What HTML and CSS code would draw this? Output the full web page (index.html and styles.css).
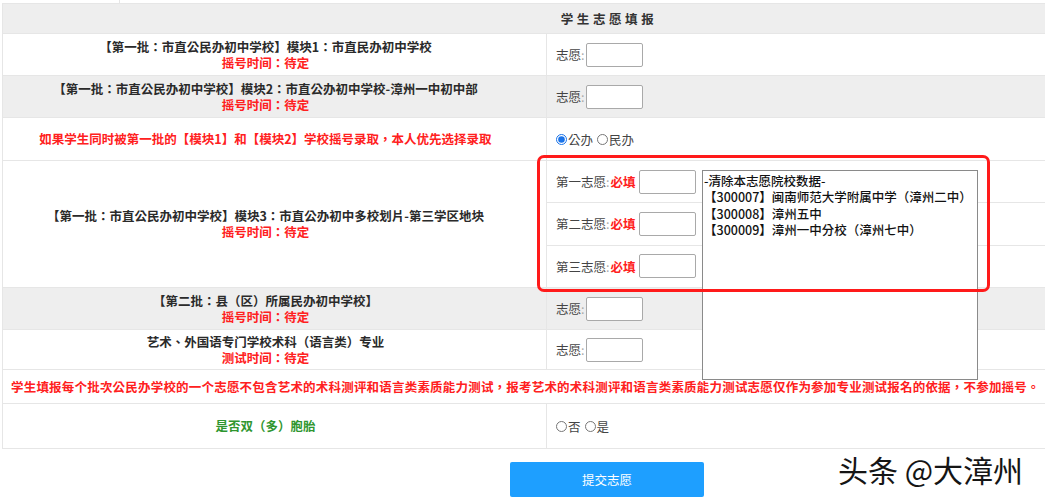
FILE: index.html
```html
<!DOCTYPE html>
<html lang="zh-CN">
<head>
<meta charset="utf-8">
<title>学生志愿填报</title>
<link rel="stylesheet" href="styles.css">
</head>
<body>
<div class="page">
  <div class="sliver"><div class="sliver-cell"></div></div>
  <div class="tbl">
    <div class="row head"><div class="head-title">学生志愿填报</div></div>

    <div class="row">
      <div class="cl"><div class="lbl">【第一批：市直公民办初中学校】模块1：市直民办初中学校</div><div class="red">摇号时间：待定</div></div>
      <div class="cr"><span class="fl">志愿<i>:</i></span><span class="inp"></span></div>
    </div>

    <div class="row gray">
      <div class="cl"><div class="lbl">【第一批：市直公民办初中学校】模块2：市直公办初中学校-漳州一中初中部</div><div class="red">摇号时间：待定</div></div>
      <div class="cr"><span class="fl">志愿<i>:</i></span><span class="inp"></span></div>
    </div>

    <div class="row r3">
      <div class="cl"><div class="red">如果学生同时被第一批的【模块1】和【模块2】学校摇号录取，本人优先选择录取</div></div>
      <div class="cr">
        <label class="radio"><input type="radio" name="pri" checked>公办</label>
        <label class="radio"><input type="radio" name="pri">民办</label>
      </div>
    </div>

    <div class="row r4">
      <div class="cl"><div class="lbl">【第一批：市直公民办初中学校】模块3：市直公办初中多校划片-第三学区地块</div><div class="red">摇号时间：待定</div></div>
      <div class="cr sub-wrap">
        <div class="sub"><span class="fl">第一志愿<i>:</i></span><span class="must">必填</span><span class="inp"></span></div>
        <div class="sub"><span class="fl">第二志愿<i>:</i></span><span class="must">必填</span><span class="inp"></span></div>
        <div class="sub"><span class="fl">第三志愿<i>:</i></span><span class="must">必填</span><span class="inp"></span></div>
        <div class="listbox">
          <div class="opt">-清除本志愿院校数据-</div>
          <div class="opt">【300007】闽南师范大学附属中学（漳州二中）</div>
          <div class="opt">【300008】漳州五中</div>
          <div class="opt">【300009】漳州一中分校（漳州七中）</div>
        </div>
      </div>
    </div>

    <div class="row gray">
      <div class="cl"><div class="lbl">【第二批：县（区）所属民办初中学校】</div><div class="red">摇号时间：待定</div></div>
      <div class="cr"><span class="fl">志愿<i>:</i></span><span class="inp"></span></div>
    </div>

    <div class="row r6">
      <div class="cl"><div class="lbl">艺术、外国语专门学校术科（语言类）专业</div><div class="red">测试时间：待定</div></div>
      <div class="cr"><span class="fl">志愿<i>:</i></span><span class="inp"></span></div>
    </div>

    <div class="row full r7">
      <div class="note">学生填报每个批次公民办学校的一个志愿不包含艺术的术科测评和语言类素质能力测试，报考艺术的术科测评和语言类素质能力测试志愿仅作为参加专业测试报名的依据，不参加摇号。</div>
    </div>

    <div class="row r8">
      <div class="cl"><div class="green">是否双（多）胞胎</div></div>
      <div class="cr">
        <label class="radio"><input type="radio" name="twin">否</label>
        <label class="radio"><input type="radio" name="twin">是</label>
      </div>
    </div>
  </div>

  <div class="actions"><button class="btn" type="button">提交志愿</button></div>

  <div class="mark-box"></div>
  <div class="watermark">头条 @大漳州</div>
</div>
</body>
</html>
```

FILE: styles.css
```css
html, body {
  margin: 0;
  padding: 0;
  overflow: hidden;
  background: #fff;
}
body {
  font-family: "Noto Sans CJK TC", "Noto Sans CJK SC", sans-serif;
  font-size: 12.5px;
  color: #333;
}
.tbl {
  font-feature-settings: "locl" 0;
}
.page {
  position: relative;
  width: 1212px;
  padding-left: 2px;
  box-sizing: border-box;
}
.sliver {
  height: 4px;
  border-bottom: 1px solid #e6e6e6;
  box-sizing: border-box;
}
.sliver-cell {
  width: 117px;
  height: 3px;
  border-right: 1px solid #e6e6e6;
}
.tbl {
  width: 1208px;
  border-left: 1px solid #e6e6e6;
}
.row {
  display: grid;
  grid-template-columns: 544px 1fr;
  height: 42px;
  border-bottom: 1px solid #e6e6e6;
  box-sizing: border-box;
}
.row.gray, .row.head { background: #eeeeee; }
.row.head {
  display: flex;
  align-items: center;
  justify-content: center;
  height: 30px;
}
.head-title {
  font-weight: bold;
  letter-spacing: 3.6px;
  color: #333;
  padding-left: 4px;
}
.row.r3 { height: 43px; }
.row.r4 { height: 127px; }
.row.r6 { height: 40px; }
.row.r7 { height: 34px; display: flex; align-items: center; }
.row.r8 { height: 45px; }

.cl {
  border-right: 1px solid #e6e6e6;
  display: flex;
  flex-direction: column;
  align-items: center;
  justify-content: center;
  text-align: center;
  line-height: 16px;
  padding-right: 18px;
  white-space: nowrap;
  font-weight: 600;
}
.lbl { color: #2a2a2a; }
.red { color: #ff2020; }
.green { color: #2f962f; }
.note {
  color: #ff2020;
  font-weight: 600;
  padding-left: 8px;
  white-space: nowrap;
  letter-spacing: 0.2px;
}
.cr {
  display: flex;
  align-items: center;
  padding-left: 9px;
  color: #444;
  white-space: nowrap;
  font-weight: normal;
}
.fl { color: #444; }
.fl i { font-style: normal; color: #aaa; margin-right: 1px; }
.must { color: #ff2020; font-weight: 600; margin-right: 3px; }
.inp {
  display: inline-block;
  width: 57px;
  height: 24px;
  border: 1px solid #a9a9a9;
  border-radius: 2px;
  box-sizing: border-box;
  background: #fff;
}
.radio {
  display: inline-flex;
  align-items: center;
  margin-right: 4px;
  color: #444;
}
.radio input {
  width: 11px;
  height: 11px;
  margin: 0 1px 0 0;
  accent-color: #1a73e8;
}
.sub-wrap {
  position: relative;
  display: flex;
  flex-direction: column;
  align-items: stretch;
  padding-left: 0;
}
.sub {
  flex: 1;
  display: flex;
  align-items: center;
  padding-left: 9px;
  border-bottom: 1px solid #e6e6e6;
}
.sub:nth-child(3) { border-bottom: none; }
.listbox {
  position: absolute;
  left: 155px;
  top: 9px;
  width: 276px;
  height: 210px;
  border: 1px solid #8a8a8a;
  box-sizing: border-box;
  background: #fff;
  padding: 2px 0 0 1px;
  color: #111;
  font-weight: 500;
  z-index: 2;
}
.opt {
  line-height: 16.4px;
  white-space: nowrap;
}
.actions {
  width: 1210px;
  display: flex;
  justify-content: center;
  padding-top: 13px;
}
.btn {
  width: 194px;
  height: 35px;
  border: none;
  border-radius: 2px;
  background: #1e9fff;
  color: #fff;
  font-family: inherit;
  font-size: 12.5px;
  padding: 0;
}
.mark-box {
  position: absolute;
  left: 537px;
  top: 155px;
  width: 453px;
  height: 137px;
  border: 3px solid #ff1a1a;
  border-radius: 7px;
  box-sizing: border-box;
  z-index: 3;
}
.watermark {
  position: absolute;
  left: 838px;
  top: 449px;
  font-size: 30px;
  line-height: 40px;
  color: #151515;
  white-space: nowrap;
  text-shadow: 1px 1px 0 #fff, -1px -1px 0 #fff;
  z-index: 4;
}
```
